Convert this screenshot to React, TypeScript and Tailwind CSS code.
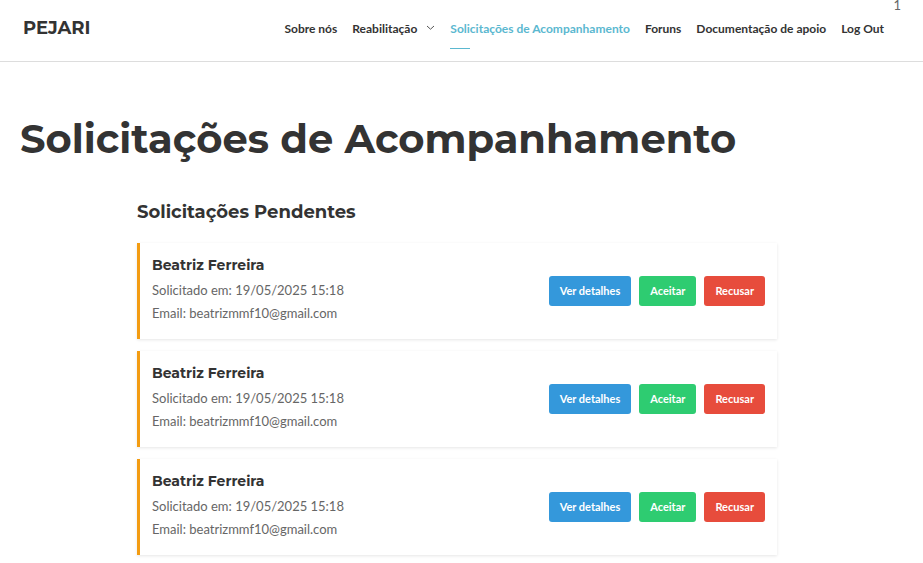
type Request = { id: number; name: string; date: string; email: string };

const requests: Request[] = [1, 2, 3].map((id) => ({
  id,
  name: "Beatriz Ferreira",
  date: "19/05/2025 15:18",
  email: "beatrizmmf10@gmail.com",
}));

const heading = "font-[Montserrat,Inter,sans-serif] text-[#333333]";
const action = "h-[30px] rounded-[3px] px-[11px] text-[11px] font-bold text-white";

function Header() {
  return (
    <header className="flex h-[62px] items-start justify-between border-b border-[#dddddd] pr-[39px] pl-[23px]">
      <a href="#inicio" className={`${heading} pt-4 text-[18px] leading-6 font-bold`}>
        PEJARI
      </a>
      <nav className="flex gap-[15px] pt-5 text-[12px] leading-[18px] font-bold whitespace-nowrap text-[#333333]">
        <a href="#sobre">Sobre nós</a>
        <a href="#reabilitacao" className="flex">
          Reabilitação
          <svg className="mt-[5px] ml-[9px] h-[6px] w-[9px]" viewBox="0 0 9 6" fill="none" stroke="#555555" aria-hidden="true">
            <path d="M1 1 L4.5 4.2 L8 1" />
          </svg>
        </a>
        <a href="#solicitacoes" aria-current="page" className="text-[#5bb8d0]">
          Solicitações de Acompanhamento
          <span className="mt-[10px] block h-px w-5 bg-[#5bb8d0]" />
        </a>
        <a href="#foruns">Foruns</a>
        <a href="#documentacao">Documentação de apoio</a>
        <a href="#sair">Log Out</a>
      </nav>
    </header>
  );
}

function RequestCard({ request }: { request: Request }) {
  return (
    <li className="flex min-h-24 items-center justify-between border-l-[3px] border-[#f39c12] bg-white p-3 shadow-[0_1px_3px_rgba(0,0,0,0.1)]">
      <div className="self-start">
        <h3 className={`${heading} mb-1 text-[14px] leading-5 font-bold`}>{request.name}</h3>
        <p className="text-[13px] leading-[23px]">Solicitado em: {request.date}</p>
        <p className="text-[13px] leading-[23px]">Email: {request.email}</p>
      </div>
      <div className="flex gap-2">
        <button type="button" className={`${action} bg-[#3498db]`}>Ver detalhes</button>
        <button type="button" className={`${action} bg-[#2ecc71]`}>Aceitar</button>
        <button type="button" className={`${action} bg-[#e74c3c]`}>Recusar</button>
      </div>
    </li>
  );
}

export default function App() {
  return (
    <div className="relative min-h-screen bg-white font-[Lato,sans-serif] text-[#666666]">
      <span className="absolute top-0 right-[22px] text-[13px] leading-[10px]">1</span>
      <Header />
      <main className="pt-[50px] pr-[29px] pb-2 pl-5">
        <h1 className={`${heading} text-[40px] leading-[54px] font-bold`}>Solicitações de Acompanhamento</h1>
        <section className="mx-auto mt-[34px] max-w-[640px]">
          <h2 className={`${heading} text-[18px] leading-6 font-bold`}>Solicitações Pendentes</h2>
          <ul className="mt-[19px] flex flex-col gap-3">
            {requests.map((request) => (
              <RequestCard key={request.id} request={request} />
            ))}
          </ul>
        </section>
      </main>
    </div>
  );
}
